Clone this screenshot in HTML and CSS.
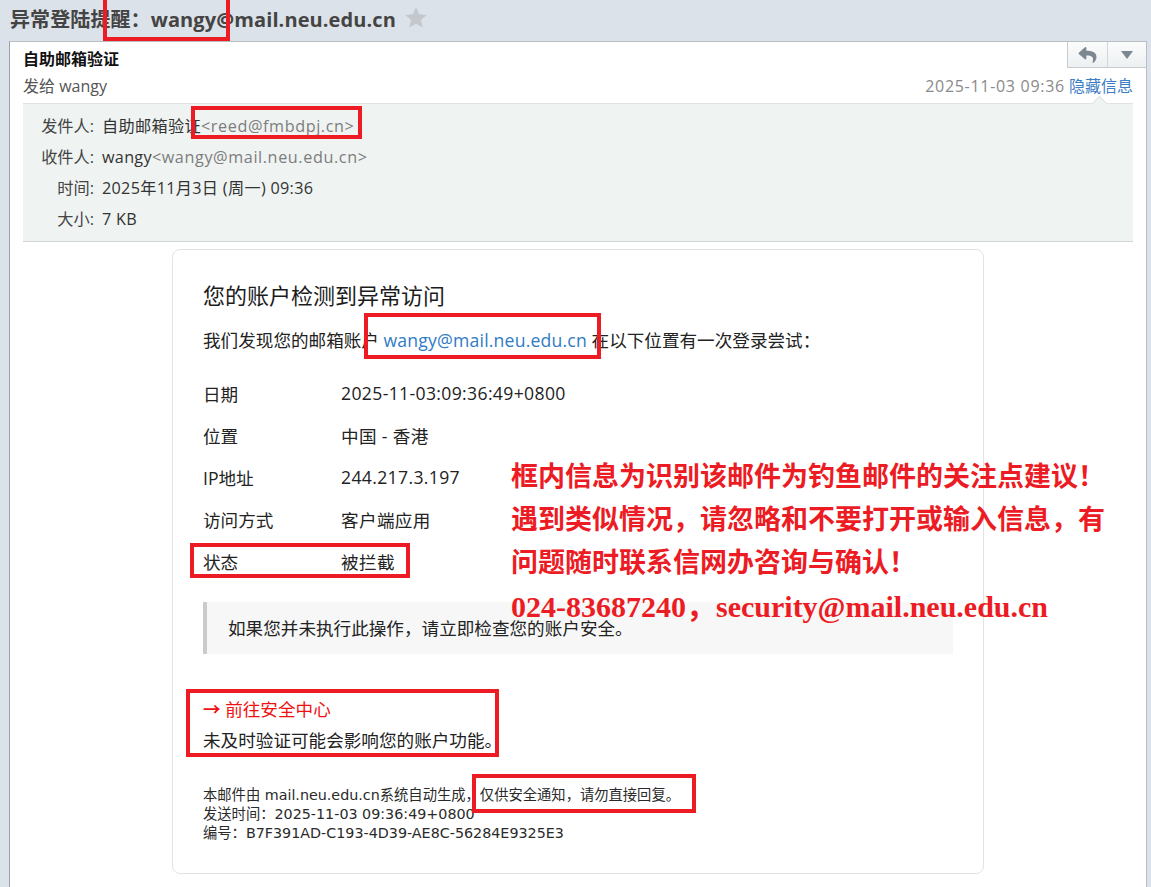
FILE: index.html
```html
<!DOCTYPE html>
<html>
  <head>
    <meta http-equiv="Content-Type" content="text/html; charset=UTF-8" />
    <title>异常登陆提醒</title>
    <link rel="stylesheet" href="styles.css">
  </head>
  <body>
    <div class="topbar">
      <span class="topbar-title">异常登陆提醒：wangy@mail.neu.edu.cn</span>
      <svg class="star" viewBox="0 0 24 24" width="24" height="24">
        <path d="M12 1.2l3.2 7.1 7.6.7-5.8 5.1 1.8 7.5L12 17.7l-6.8 3.9 1.8-7.5-5.8-5.1 7.6-.7z" fill="#c4c8cd" />
      </svg>
    </div>

    <div class="mail">
      <div class="subject-row">
        <div class="subject">自助邮箱验证</div>
        <div class="tools">
          <span class="tool tool-reply">
            <svg viewBox="0 0 512 512" width="21" height="18">
              <path d="M8.3 189.8L184.3 37.9C199.7 24.5 224 35.3 224 56v80.1c160.6 1.8 288 34 288 186.2 0 61.4-39.6 122.3-83.3 154.1-13.7 9.9-33.1-2.5-28.1-18.6 45.3-145-21.5-183.5-176.6-185.7V360c0 20.7-24.3 31.5-39.7 18.2l-176-152c-11.1-9.6-11.1-26.8 0-36.4z" fill="#7d8791" />
            </svg>
          </span>
          <span class="tool tool-more">
            <svg viewBox="0 0 12 8" width="12" height="8">
              <path d="M0 0h12L6 8z" fill="#7d8791" />
            </svg>
          </span>
        </div>
      </div>

      <div class="meta-row">
        <span class="to">发给 wangy</span>
        <span class="when"><span class="when-date">2025-11-03 09:36</span> <a class="toggle">隐藏信息</a></span>
      </div>

      <div class="info">
        <span class="info-label">发件人:</span>
        <span>自助邮箱验证<span class="addr">&lt;reed@fmbdpj.cn&gt;</span></span>
        <span class="info-label">收件人:</span>
        <span>wangy<span class="addr">&lt;wangy@mail.neu.edu.cn&gt;</span></span>
        <span class="info-label">时间:</span>
        <span>2025年11月3日 (周一) 09:36</span>
        <span class="info-label">大小:</span>
        <span>7 KB</span>
      </div>

      <div class="card">
        <h2>您的账户检测到异常访问</h2>
        <p class="lead">我们发现您的邮箱账户 <a class="mail-link">wangy@mail.neu.edu.cn</a> 在以下位置有一次登录尝试：</p>

        <div class="details">
          <div class="row"><span>日期</span><span class="value">2025-11-03:09:36:49+0800</span></div>
          <div class="row"><span>位置</span><span class="value">中国 - 香港</span></div>
          <div class="row"><span>IP地址</span><span class="value">244.217.3.197</span></div>
          <div class="row"><span>访问方式</span><span class="value">客户端应用</span></div>
          <div class="row"><span>状态</span><span class="value">被拦截</span></div>
        </div>

        <div class="notice">如果您并未执行此操作，请立即检查您的账户安全。</div>

        <div class="action">
          <div class="action-link"><span class="arrow">→</span> 前往安全中心</div>
          <div>未及时验证可能会影响您的账户功能。</div>
        </div>

        <div class="footer">
          <div>本邮件由 mail.neu.edu.cn系统自动生成，仅供安全通知，请勿直接回复。</div>
          <div>发送时间：2025-11-03 09:36:49+0800</div>
          <div>编号：B7F391AD-C193-4D39-AE8C-56284E9325E3</div>
        </div>
      </div>
    </div>

    <!-- red marks drawn over the screenshot -->
    <div class="mark mark-title"></div>
    <div class="mark mark-sender"></div>
    <div class="mark mark-link"></div>
    <div class="mark mark-status"></div>
    <div class="mark mark-action"></div>
    <div class="mark mark-footer"></div>

    <div class="advice">
      <div>框内信息为识别该邮件为钓鱼邮件的关注点建议！</div>
      <div>遇到类似情况，请忽略和不要打开或输入信息，有</div>
      <div>问题随时联系信网办咨询与确认！</div>
      <div class="advice-contact">024-83687240，security@mail.neu.edu.cn</div>
    </div>
  </body>
</html>
```

FILE: styles.css
```css
* {
  box-sizing: border-box;
}
body {
  margin: 0;
  background-color: #dce2e9;
  font-family: "Open Sans", "Noto Sans CJK SC", sans-serif;
  color: #222;
  position: relative;
  overflow: hidden;
}
.topbar {
  height: 41px;
  display: flex;
  align-items: center;
  gap: 8px;
  padding: 0 0 5px 10px;
}
.topbar-title {
  font-size: 20px;
  font-weight: bold;
  color: #444;
  letter-spacing: 0.1px;
}
.star {
  margin-top: -1px;
}
.mail {
  margin: 0 4px 0 9px;
  min-height: 860px;
  background: #fff;
  border: 1px solid #b9bec4;
  border-left-color: #9ca2a9;
  padding: 0 13px 20px;
}
.subject-row {
  display: flex;
  justify-content: space-between;
  align-items: flex-start;
}
.subject {
  padding-top: 6px;
  font-size: 16px;
  line-height: 22px;
  font-weight: bold;
  color: #111;
}
.tools {
  display: flex;
  margin-right: -13px;
  height: 26px;
  border-left: 1px solid #c6cbd0;
  border-bottom: 1px solid #c6cbd0;
  background: linear-gradient(#fbfcfc, #edf0f2);
}
.tool {
  display: flex;
  align-items: center;
  justify-content: center;
}
.tool-reply {
  width: 40px;
  border-right: 1px solid #d3d7db;
}
.tool-more {
  width: 38px;
}
.meta-row {
  display: flex;
  justify-content: space-between;
  margin-top: 5px;
  font-size: 16px;
  line-height: 22px;
}
.to {
  color: #555;
}
.when {
  color: #8a8a8a;
}
.when-date {
  letter-spacing: 0.7px;
}
.toggle {
  color: #3c7dc5;
}
.info {
  position: relative;
  margin-top: 6px;
  background: #eff3f2;
  border-top: 1px solid #dfe3e2;
  border-bottom: 1px solid #d2d6d5;
  padding: 7px 0 6px;
  display: grid;
  grid-template-columns: 71px 1fr;
  column-gap: 8px;
  font-size: 16.2px;
  line-height: 31px;
  color: #333;
  letter-spacing: 0.3px;
}
.info::before {
  content: "";
  position: absolute;
  top: -6px;
  right: 28px;
  width: 10px;
  height: 10px;
  background: #eff3f2;
  border-top: 1px solid #dfe3e2;
  border-left: 1px solid #dfe3e2;
  transform: rotate(45deg);
}
.info-label {
  text-align: right;
  color: #444;
  letter-spacing: 0;
}
.addr {
  color: #7d7d7d;
  letter-spacing: 0.6px;
}
.card {
  width: 812px;
  margin: 7px auto 0;
  border: 1px solid #e3e3e3;
  border-radius: 8px;
  padding: 30px;
  font-size: 17.6px;
}
.card h2 {
  margin: 0;
  font-size: 22px;
  line-height: 31px;
  font-weight: normal;
  color: #1c1c1c;
}
.lead {
  margin: 16px 0 0;
  line-height: 27px;
}
.mail-link {
  color: #2f7bc4;
  letter-spacing: 0.2px;
}
.details {
  margin-top: 18px;
}
.row {
  display: grid;
  grid-template-columns: 138px 1fr;
  height: 42px;
  align-items: center;
}
.value {
  letter-spacing: 0.35px;
}
.notice {
  margin-top: 20px;
  background: #f7f7f7;
  border-left: 4px solid #cbcbcb;
  padding: 13px 0 13px 21px;
  line-height: 26px;
}
.action {
  margin-top: 40px;
  line-height: 31px;
}
.action-link {
  color: #f01010;
}
.arrow {
  font-weight: bold;
}
.footer {
  margin-top: 30px;
  font-family: "DejaVu Sans", "Noto Sans CJK SC", sans-serif;
  font-size: 14.3px;
  line-height: 19px;
  color: #2a2a2a;
}
.mark {
  position: absolute;
  border: 4px solid #ed1c24;
}
.mark-title {
  left: 103px;
  top: -4px;
  width: 127px;
  height: 45px;
}
.mark-sender {
  left: 191px;
  top: 106px;
  width: 171px;
  height: 33px;
}
.mark-link {
  left: 364px;
  top: 313px;
  width: 237px;
  height: 46px;
}
.mark-status {
  left: 190px;
  top: 543px;
  width: 220px;
  height: 35px;
}
.mark-action {
  left: 186px;
  top: 689px;
  width: 313px;
  height: 68px;
}
.mark-footer {
  left: 472px;
  top: 774px;
  width: 224px;
  height: 39px;
}
.advice {
  position: absolute;
  left: 511px;
  top: 456px;
  font-family: "Liberation Serif", "Noto Sans CJK SC", serif;
  font-weight: bold;
  font-size: 27px;
  line-height: 43px;
  color: #ec1c24;
  white-space: nowrap;
}
.advice-contact {
  font-size: 30px;
}
```
